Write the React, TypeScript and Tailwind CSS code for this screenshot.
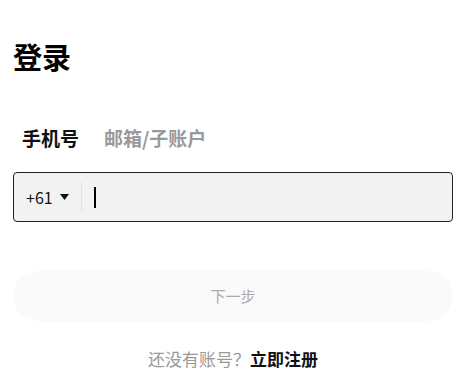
import { useState } from 'react';

export default function App() {
  const [tab, setTab] = useState<'phone' | 'email'>('phone');
  const font = { fontFamily: '"Noto Sans CJK SC", "Noto Sans", sans-serif' };

  return (
    <div className="w-[459px] h-[392px] bg-white pl-[13px] pr-[6px] pt-[36px] text-black" style={font}>
      <h1 className="text-[29px] leading-[40px] font-bold">登录</h1>

      <div className="flex items-center gap-[25px] mt-[42px] pl-[9px] h-[40px] text-[19px] font-bold">
        <button onClick={() => setTab('phone')} className={tab === 'phone' ? 'text-[#111]' : 'text-[#999]'}>
          手机号
        </button>
        <button onClick={() => setTab('email')} className={tab === 'email' ? 'text-[#111]' : 'text-[#999]'}>
          邮箱/子账户
        </button>
      </div>

      <div className="mt-[14px] flex items-center h-[50px] rounded-[4px] border border-[#222] bg-[#f2f2f2]">
        <div className="flex items-center pl-[12px] pr-[12px] gap-[6px] text-[16px] text-[#111]">
          <span>+61</span>
          <svg width="9" height="6" viewBox="0 0 9 6" className="ml-[1px]">
            <path d="M0 0h9L4.5 6z" fill="#111" />
          </svg>
        </div>
        <div className="w-px h-[30px] bg-[#e2e2e2]" />
        <div className="flex-1 h-full flex items-center pl-[12px]">
          <div className="w-[2px] h-[21px] bg-black" />
        </div>
      </div>

      <button className="mt-[49px] w-full h-[50px] rounded-full bg-[#fafafa] text-[15px] text-[#aaa]">
        下一步
      </button>

      <p className="mt-[26px] text-center text-[17px] leading-[24px]">
        <span className="text-[#999]">还没有账号？</span>
        <span className="font-bold text-[#111]">立即注册</span>
      </p>
    </div>
  );
}
